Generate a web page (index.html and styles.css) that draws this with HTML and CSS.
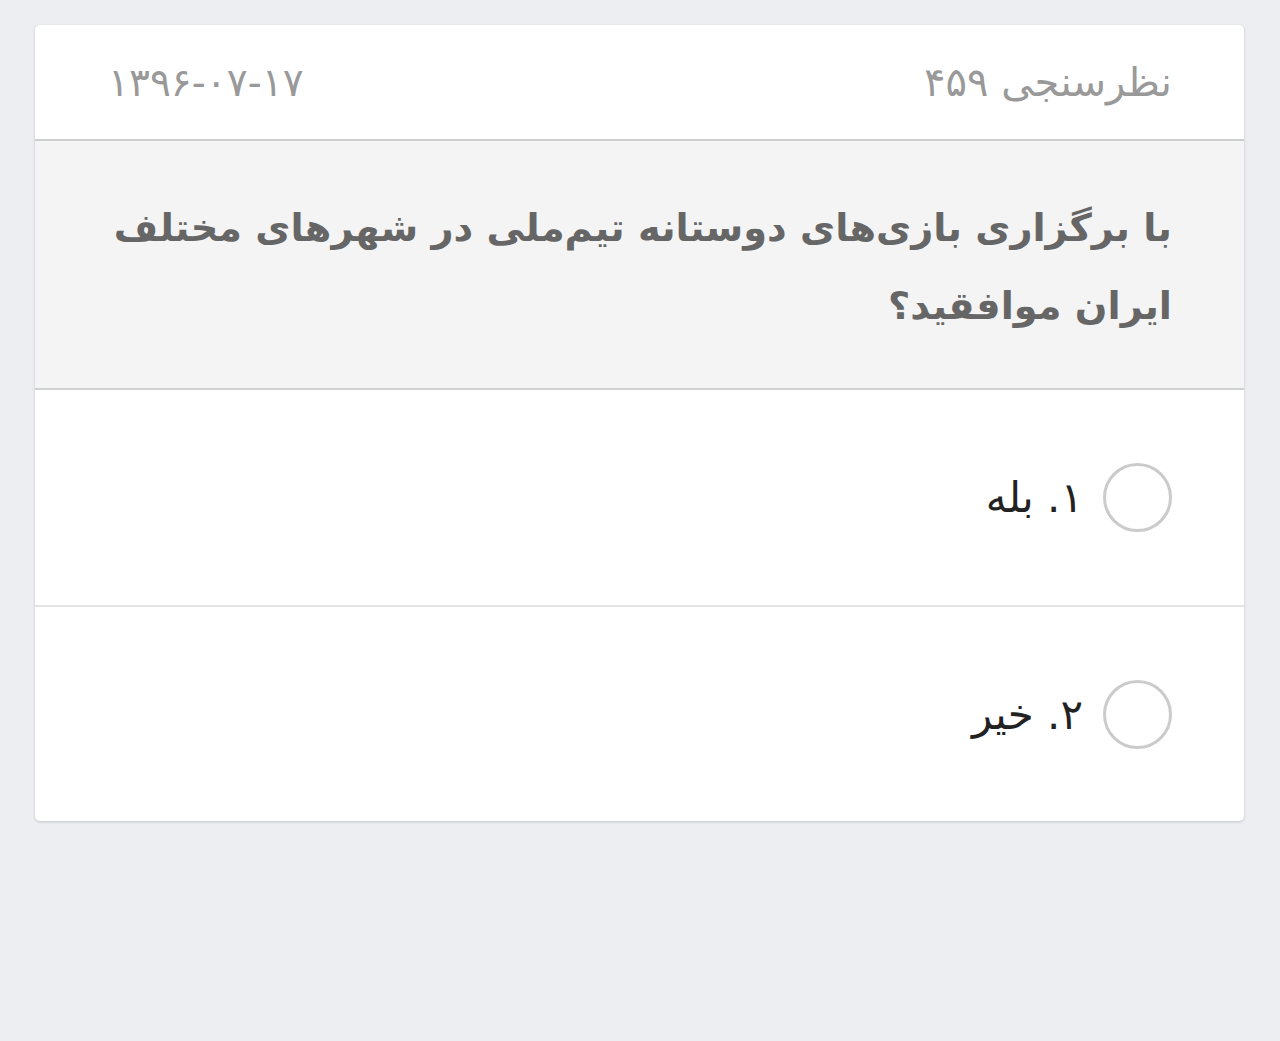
FILE: index.html
```html
<!DOCTYPE html>
<html lang="fa" dir="rtl">
<head>
<meta charset="utf-8">
<title>نظرسنجی ۴۵۹</title>
<link rel="stylesheet" href="styles.css">
</head>
<body>
<div class="card">
  <div class="card-header">
    <span class="poll-title">نظرسنجی ۴۵۹</span>
    <span class="poll-date" dir="ltr">۱۳۹۶-۰۷-۱۷</span>
  </div>
  <div class="question">با برگزاری بازی‌های دوستانه تیم‌ملی در شهرهای مختلف ایران موافقید؟</div>
  <label class="option">
    <span class="radio"></span>
    <span class="option-text">۱. بله</span>
  </label>
  <label class="option last">
    <span class="radio"></span>
    <span class="option-text">۲. خیر</span>
  </label>
</div>
</body>
</html>
```
FILE: styles.css
```css
html, body {
  margin: 0;
  padding: 0;
  background: #eceef1;
  height: 100%;
}
body {
  font-family: "DejaVu Sans", sans-serif;
  padding: 25px 36px 0 35px;
  box-sizing: border-box;
}
.card {
  background: #ffffff;
  border-radius: 5px;
  box-shadow: 0 1px 3px rgba(0, 0, 0, 0.18);
  overflow: hidden;
}
.card-header {
  display: flex;
  justify-content: space-between;
  align-items: center;
  height: 114px;
  padding: 0 72px 0 73px;
  border-bottom: 2px solid #cdcecf;
  color: #999999;
  font-size: 40px;
}
.poll-date {
  font-size: 39px;
  letter-spacing: 1px;
}
.question {
  background: #f4f4f4;
  padding: 48px 72px 44px 73px;
  font-size: 38.3px;
  font-weight: bold;
  line-height: 78px;
  color: #666666;
  border-bottom: 2px solid #cfd0d1;
  height: 155px;
}
.option {
  display: flex;
  align-items: center;
  gap: 20px;
  height: 217px;
  padding: 0 72px 0 73px;
  border-bottom: 2px solid #e3e3e4;
  box-sizing: border-box;
}
.option.last {
  border-bottom: none;
  height: 214px;
}
.radio {
  width: 63px;
  height: 63px;
  border: 3px solid #cbcbcb;
  border-radius: 50%;
  flex: none;
}
.option-text {
  font-size: 42px;
  color: #222222;
}
```
